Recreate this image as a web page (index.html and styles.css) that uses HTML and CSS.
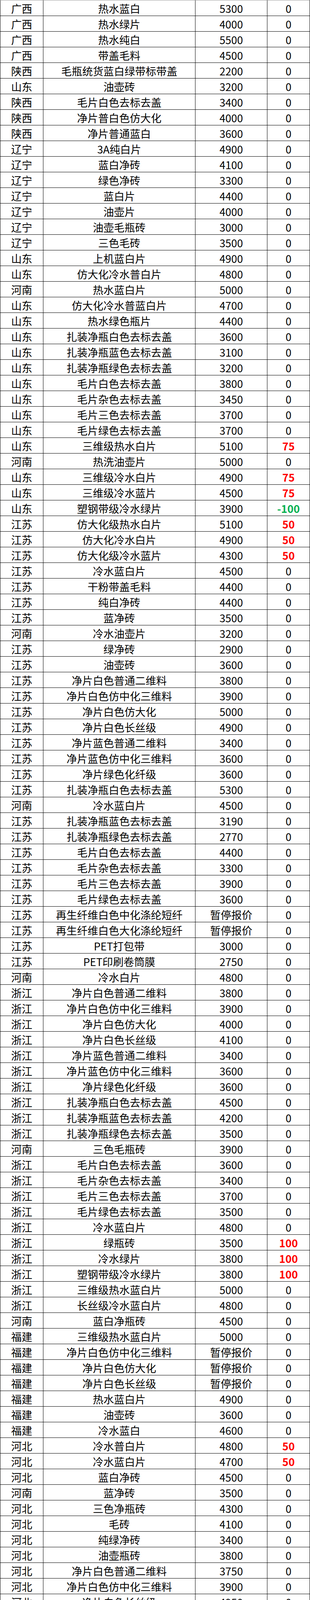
FILE: index.html
```html
<!DOCTYPE html>
<html lang="zh-CN">
<head>
<meta charset="utf-8">
<title>再生料报价</title>
<link rel="stylesheet" href="styles.css">
</head>
<body>
<div class="sheet">
<div class="row first"><span>广西</span><span>热水蓝白</span><span>5300</span><span>0</span></div>
<div class="row"><span>广西</span><span>热水绿片</span><span>4000</span><span>0</span></div>
<div class="row"><span>广西</span><span>热水纯白</span><span>5500</span><span>0</span></div>
<div class="row"><span>广西</span><span>带盖毛料</span><span>4500</span><span>0</span></div>
<div class="row"><span>陕西</span><span>毛瓶统货蓝白绿带标带盖</span><span>2200</span><span>0</span></div>
<div class="row"><span>山东</span><span>油壶砖</span><span>3200</span><span>0</span></div>
<div class="row"><span>陕西</span><span>毛片白色去标去盖</span><span>3400</span><span>0</span></div>
<div class="row"><span>陕西</span><span>净片普白色仿大化</span><span>4000</span><span>0</span></div>
<div class="row"><span>陕西</span><span>净片普通蓝白</span><span>3600</span><span>0</span></div>
<div class="row"><span>辽宁</span><span>3A纯白片</span><span>4900</span><span>0</span></div>
<div class="row"><span>辽宁</span><span>蓝白净砖</span><span>4100</span><span>0</span></div>
<div class="row"><span>辽宁</span><span>绿色净砖</span><span>3300</span><span>0</span></div>
<div class="row"><span>辽宁</span><span>蓝白片</span><span>4400</span><span>0</span></div>
<div class="row"><span>辽宁</span><span>油壶片</span><span>4000</span><span>0</span></div>
<div class="row"><span>辽宁</span><span>油壶毛瓶砖</span><span>3000</span><span>0</span></div>
<div class="row"><span>辽宁</span><span>三色毛砖</span><span>3500</span><span>0</span></div>
<div class="row"><span>山东</span><span>上机蓝白片</span><span>4900</span><span>0</span></div>
<div class="row"><span>山东</span><span>仿大化冷水普白片</span><span>4800</span><span>0</span></div>
<div class="row"><span>河南</span><span>热水蓝白片</span><span>5000</span><span>0</span></div>
<div class="row"><span>山东</span><span>仿大化冷水普蓝白片</span><span>4700</span><span>0</span></div>
<div class="row"><span>山东</span><span>热水绿色瓶片</span><span>4400</span><span>0</span></div>
<div class="row"><span>山东</span><span>扎装净瓶白色去标去盖</span><span>3600</span><span>0</span></div>
<div class="row"><span>山东</span><span>扎装净瓶蓝色去标去盖</span><span>3100</span><span>0</span></div>
<div class="row"><span>山东</span><span>扎装净瓶绿色去标去盖</span><span>3200</span><span>0</span></div>
<div class="row"><span>山东</span><span>毛片白色去标去盖</span><span>3800</span><span>0</span></div>
<div class="row"><span>山东</span><span>毛片杂色去标去盖</span><span>3450</span><span>0</span></div>
<div class="row"><span>山东</span><span>毛片三色去标去盖</span><span>3700</span><span>0</span></div>
<div class="row"><span>山东</span><span>毛片绿色去标去盖</span><span>3700</span><span>0</span></div>
<div class="row"><span>山东</span><span>三维级热水白片</span><span>5100</span><span class="up">75</span></div>
<div class="row"><span>河南</span><span>热洗油壶片</span><span>5000</span><span>0</span></div>
<div class="row"><span>山东</span><span>三维级冷水白片</span><span>4900</span><span class="up">75</span></div>
<div class="row"><span>山东</span><span>三维级冷水蓝片</span><span>4500</span><span class="up">75</span></div>
<div class="row"><span>山东</span><span>塑钢带级冷水绿片</span><span>3900</span><span class="down">-100</span></div>
<div class="row"><span>江苏</span><span>仿大化级热水白片</span><span>5100</span><span class="up">50</span></div>
<div class="row"><span>江苏</span><span>仿大化冷水白片</span><span>4900</span><span class="up">50</span></div>
<div class="row"><span>江苏</span><span>仿大化级冷水蓝片</span><span>4300</span><span class="up">50</span></div>
<div class="row"><span>江苏</span><span>冷水蓝白片</span><span>4500</span><span>0</span></div>
<div class="row"><span>江苏</span><span>干粉带盖毛料</span><span>4400</span><span>0</span></div>
<div class="row"><span>江苏</span><span>纯白净砖</span><span>4400</span><span>0</span></div>
<div class="row"><span>江苏</span><span>蓝净砖</span><span>3500</span><span>0</span></div>
<div class="row"><span>河南</span><span>冷水油壶片</span><span>3200</span><span>0</span></div>
<div class="row"><span>江苏</span><span>绿净砖</span><span>2900</span><span>0</span></div>
<div class="row"><span>江苏</span><span>油壶砖</span><span>3600</span><span>0</span></div>
<div class="row"><span>江苏</span><span>净片白色普通二维料</span><span>3800</span><span>0</span></div>
<div class="row"><span>江苏</span><span>净片白色仿中化三维料</span><span>3900</span><span>0</span></div>
<div class="row"><span>江苏</span><span>净片白色仿大化</span><span>5000</span><span>0</span></div>
<div class="row"><span>江苏</span><span>净片白色长丝级</span><span>4900</span><span>0</span></div>
<div class="row"><span>江苏</span><span>净片蓝色普通二维料</span><span>3400</span><span>0</span></div>
<div class="row"><span>江苏</span><span>净片蓝色仿中化三维料</span><span>3600</span><span>0</span></div>
<div class="row"><span>江苏</span><span>净片绿色化纤级</span><span>3600</span><span>0</span></div>
<div class="row"><span>江苏</span><span>扎装净瓶白色去标去盖</span><span>5300</span><span>0</span></div>
<div class="row"><span>河南</span><span>冷水蓝白片</span><span>4500</span><span>0</span></div>
<div class="row"><span>江苏</span><span>扎装净瓶蓝色去标去盖</span><span>3190</span><span>0</span></div>
<div class="row"><span>江苏</span><span>扎装净瓶绿色去标去盖</span><span>2770</span><span>0</span></div>
<div class="row"><span>江苏</span><span>毛片白色去标去盖</span><span>4400</span><span>0</span></div>
<div class="row"><span>江苏</span><span>毛片杂色去标去盖</span><span>3300</span><span>0</span></div>
<div class="row"><span>江苏</span><span>毛片三色去标去盖</span><span>3900</span><span>0</span></div>
<div class="row"><span>江苏</span><span>毛片绿色去标去盖</span><span>3600</span><span>0</span></div>
<div class="row"><span>江苏</span><span>再生纤维白色中化涤纶短纤</span><span>暂停报价</span><span>0</span></div>
<div class="row"><span>江苏</span><span>再生纤维白色大化涤纶短纤</span><span>暂停报价</span><span>0</span></div>
<div class="row"><span>江苏</span><span>PET打包带</span><span>3000</span><span>0</span></div>
<div class="row"><span>江苏</span><span>PET印刷卷筒膜</span><span>2750</span><span>0</span></div>
<div class="row"><span>河南</span><span>冷水白片</span><span>4800</span><span>0</span></div>
<div class="row"><span>浙江</span><span>净片白色普通二维料</span><span>3800</span><span>0</span></div>
<div class="row"><span>浙江</span><span>净片白色仿中化三维料</span><span>3900</span><span>0</span></div>
<div class="row"><span>浙江</span><span>净片白色仿大化</span><span>4000</span><span>0</span></div>
<div class="row"><span>浙江</span><span>净片白色长丝级</span><span>4100</span><span>0</span></div>
<div class="row"><span>浙江</span><span>净片蓝色普通二维料</span><span>3400</span><span>0</span></div>
<div class="row"><span>浙江</span><span>净片蓝色仿中化三维料</span><span>3600</span><span>0</span></div>
<div class="row"><span>浙江</span><span>净片绿色化纤级</span><span>3600</span><span>0</span></div>
<div class="row"><span>浙江</span><span>扎装净瓶白色去标去盖</span><span>4500</span><span>0</span></div>
<div class="row"><span>浙江</span><span>扎装净瓶蓝色去标去盖</span><span>4200</span><span>0</span></div>
<div class="row"><span>浙江</span><span>扎装净瓶绿色去标去盖</span><span>3500</span><span>0</span></div>
<div class="row"><span>河南</span><span>三色毛瓶砖</span><span>3900</span><span>0</span></div>
<div class="row"><span>浙江</span><span>毛片白色去标去盖</span><span>3600</span><span>0</span></div>
<div class="row"><span>浙江</span><span>毛片杂色去标去盖</span><span>3400</span><span>0</span></div>
<div class="row"><span>浙江</span><span>毛片三色去标去盖</span><span>3700</span><span>0</span></div>
<div class="row"><span>浙江</span><span>毛片绿色去标去盖</span><span>3500</span><span>0</span></div>
<div class="row"><span>浙江</span><span>冷水蓝白片</span><span>4800</span><span>0</span></div>
<div class="row"><span>浙江</span><span>绿瓶砖</span><span>3500</span><span class="up">100</span></div>
<div class="row"><span>浙江</span><span>冷水绿片</span><span>3800</span><span class="up">100</span></div>
<div class="row"><span>浙江</span><span>塑钢带级冷水绿片</span><span>3800</span><span class="up">100</span></div>
<div class="row"><span>浙江</span><span>三维级热水蓝白片</span><span>5000</span><span>0</span></div>
<div class="row"><span>浙江</span><span>长丝级冷水蓝白片</span><span>4800</span><span>0</span></div>
<div class="row"><span>河南</span><span>蓝白净瓶砖</span><span>4500</span><span>0</span></div>
<div class="row"><span>福建</span><span>三维级热水蓝白片</span><span>5000</span><span>0</span></div>
<div class="row"><span>福建</span><span>净片白色仿中化三维料</span><span>暂停报价</span><span>0</span></div>
<div class="row"><span>福建</span><span>净片白色仿大化</span><span>暂停报价</span><span>0</span></div>
<div class="row"><span>福建</span><span>净片白色长丝级</span><span>暂停报价</span><span>0</span></div>
<div class="row"><span>福建</span><span>热水蓝白片</span><span>4900</span><span>0</span></div>
<div class="row"><span>福建</span><span>油壶砖</span><span>3600</span><span>0</span></div>
<div class="row"><span>福建</span><span>冷水蓝白</span><span>4600</span><span>0</span></div>
<div class="row"><span>河北</span><span>冷水普白片</span><span>4800</span><span class="up">50</span></div>
<div class="row"><span>河北</span><span>冷水蓝白片</span><span>4700</span><span class="up">50</span></div>
<div class="row"><span>河北</span><span>蓝白净砖</span><span>4500</span><span>0</span></div>
<div class="row"><span>河南</span><span>蓝净砖</span><span>3500</span><span>0</span></div>
<div class="row"><span>河北</span><span>三色净瓶砖</span><span>4300</span><span>0</span></div>
<div class="row"><span>河北</span><span>毛砖</span><span>4100</span><span>0</span></div>
<div class="row"><span>河北</span><span>纯绿净砖</span><span>3400</span><span>0</span></div>
<div class="row"><span>河北</span><span>油壶瓶砖</span><span>3800</span><span>0</span></div>
<div class="row"><span>河北</span><span>净片白色普通二维料</span><span>3750</span><span>0</span></div>
<div class="row"><span>河北</span><span>净片白色仿中化三维料</span><span>3900</span><span>0</span></div>
<div class="row"><span>河北</span><span>净片白色长丝级</span><span>4950</span><span>0</span></div>
<div class="row"><span>河北</span><span>净片蓝色普通二维料</span><span>3300</span><span>0</span></div>
<div class="row"><span>河北</span><span>净片蓝色仿中化三维料</span><span>3500</span><span>0</span></div>
<div class="row"><span>河北</span><span>净片绿色化纤级</span><span>3500</span><span>0</span></div>
<div class="gap"></div>
<div class="title">PP再生料报价</div>
<div class="row"><span>地区</span><span>规格</span><span>价格（元/吨）</span><span>涨跌</span></div>
<div class="row"><span>广东</span><span>白色PPR管普通破碎</span><span>5700</span><span>0</span></div>
<div class="row"><span>广东</span><span>灰色PPR管破碎料</span><span>5500</span><span>0</span></div>
<div class="row"><span>陕西</span><span>红色水果筐破碎料</span><span>4000</span><span>0</span></div>
<div class="row"><span>陕西</span><span>蓝绿丙破碎料</span><span>3200</span><span>0</span></div>
<div class="row"><span>河北</span><span>白透明二级破碎</span><span>5100</span><span>0</span></div>
<div class="row"><span>河北</span><span>蓝绿丙破碎</span><span>3500</span><span>0</span></div>
<div class="row"><span>河北</span><span>白透明一级颗粒</span><span>6400</span><span>0</span></div>
<div class="row"><span>河北</span><span>白透明二级颗粒</span><span>6000</span><span>0</span></div>
<div class="row"><span>山东</span><span>保险杠破碎</span><span>3200</span><span>0</span></div>
<div class="row"><span>山东</span><span>洗衣机大白破碎</span><span>6000</span><span>0</span></div>
<div class="row"><span>山东</span><span>洗衣机二白破碎</span><span>5500</span><span>0</span></div>
<div class="row"><span>山东</span><span>白透明一级破碎</span><span>5400</span><span>0</span></div>
<div class="row"><span>广东</span><span>白透明一级颗粒</span><span>6800</span><span>0</span></div>
<div class="row"><span>山东</span><span>白透明二级破碎</span><span>5200</span><span>0</span></div>
<div class="row"><span>山东</span><span>白透明三级破碎</span><span>5000</span><span>0</span></div>
<div class="row"><span>山东</span><span>蓝色果框半透明破碎</span><span>5400</span><span>0</span></div>
<div class="row"><span>山东</span><span>白透明特级颗粒</span><span>6700</span><span>0</span></div>
<div class="row"><span>山东</span><span>白透明一级颗粒</span><span>6400</span><span>0</span></div>
<div class="row"><span>山东</span><span>白透明二级颗粒</span><span>6100</span><span>0</span></div>
<div class="row"><span>山东</span><span>吨包一级毛料</span><span>2300</span><span>0</span></div>
<div class="row"><span>山东</span><span>白色吨包一级颗粒</span><span>5100</span><span>0</span></div>
<div class="row"><span>山东</span><span>白色吨包二级颗粒</span><span>4500</span><span>0</span></div>
<div class="row"><span>山东</span><span>白色半透明吨包颗粒</span><span>5300</span><span>0</span></div>
<div class="row"><span>广东</span><span>白透明二级颗粒</span><span>6600</span><span>0</span></div>
<div class="row"><span>山东</span><span>杂色编织袋普通颗粒</span><span>3200</span><span>0</span></div>
<div class="row"><span>山东</span><span>编织袋毛料</span><span>1100</span><span>0</span></div>
<div class="row"><span>山东</span><span>红黄粉碎料</span><span>3600</span><span>0</span></div>
<div class="row"><span>山东</span><span>蓝绿粉碎料</span><span>3500</span><span>0</span></div>
<div class="row"><span>山东</span><span>花色透明粉碎料</span><span>4500</span><span>0</span></div>
<div class="row"><span>山东</span><span>吨包白色颗粒</span><span>5100</span><span>0</span></div>
<div class="row"><span>山东</span><span>水果筐黑色破碎料</span><span>950</span><span>0</span></div>
</div>
</body>
</html>
```

FILE: styles.css
```css
html, body {
  margin: 0;
  padding: 0;
  background: #ffffff;
}

.sheet {
  width: 793px;
  font-family: "Noto Sans CJK SC", "Noto Sans", sans-serif;
  font-size: 27px;
  color: #000000;
  border-bottom: 1px solid #000000;
}

.row {
  display: grid;
  grid-template-columns: 110px 389px 184px 109px;
  height: 40px;
  box-sizing: border-box;
  border-top: 1px solid #000000;
  border-right: 1px solid #000000;
}

.row.first {
  border-top-color: #9a9a9a;
}

.row span {
  display: flex;
  align-items: center;
  justify-content: center;
  border-left: 1px solid #000000;
  white-space: nowrap;
  line-height: 1;
  padding-top: 2px;
  box-sizing: border-box;
}

.row span.up {
  color: #ff0000;
  font-weight: bold;
}

.row span.down {
  color: #00b050;
  font-weight: bold;
}

.gap {
  height: 40px;
  box-sizing: border-box;
  border-top: 1px solid #000000;
  border-left: 1px solid #000000;
  border-right: 1px solid #000000;
}

.title {
  height: 40px;
  box-sizing: border-box;
  border-top: 1px solid #000000;
  border-left: 1px solid #000000;
  border-right: 1px solid #000000;
  background: #4472c4;
  color: #ffffff;
  font-weight: bold;
  display: flex;
  align-items: center;
  justify-content: center;
  padding-top: 2px;
  line-height: 1;
}
```
